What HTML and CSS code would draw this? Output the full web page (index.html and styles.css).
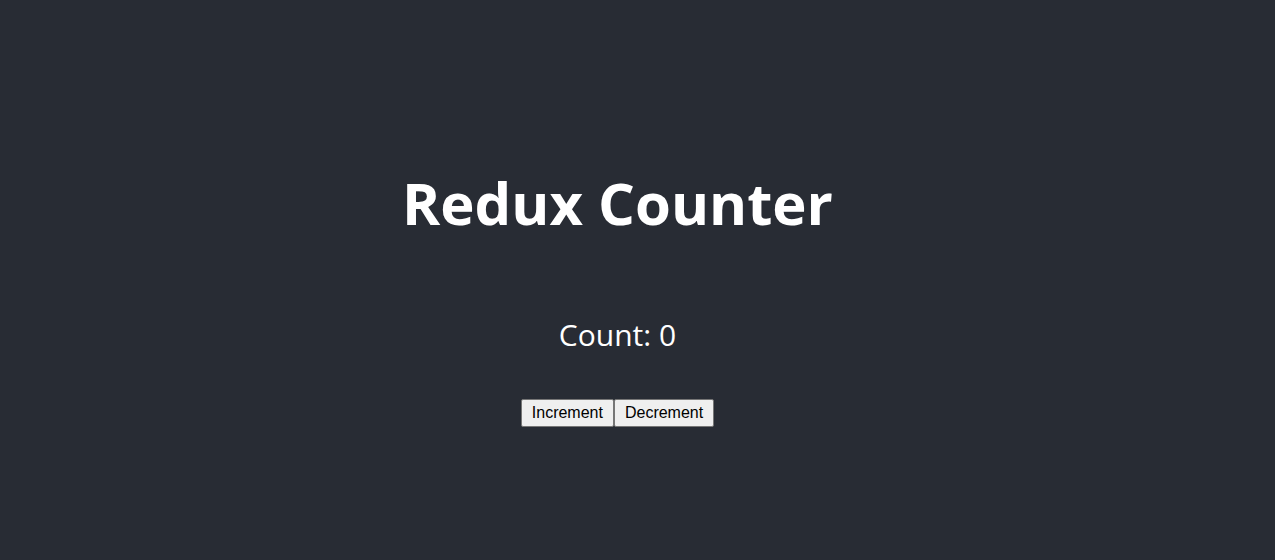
FILE: index.html
```html
<!DOCTYPE html>
<html lang="en">
<head>
<meta charset="utf-8">
<title>Redux Counter</title>
<link rel="stylesheet" href="styles.css">
</head>
<body>
<div class="app">
  <h1 class="title">Redux Counter</h1>
  <p class="count">Count: 0</p>
  <div class="actions">
    <button class="btn" type="button">Increment</button><button class="btn" type="button">Decrement</button>
  </div>
</div>
</body>
</html>
```
FILE: styles.css
```css
html, body {
  margin: 0;
  padding: 0;
}
body {
  background: #282c34;
  font-family: "Open Sans", "Noto Sans", sans-serif;
  color: #ffffff;
}
.app {
  min-height: 100vh;
  box-sizing: border-box;
  padding-top: 34px;
  padding-right: 40px;
  display: flex;
  flex-direction: column;
  align-items: center;
  justify-content: center;
}
.title {
  margin: 0;
  font-size: 58px;
  line-height: 70px;
  font-weight: 700;
}
.count {
  margin: 77px 0 0;
  font-size: 30px;
  line-height: 40px;
  font-weight: 400;
}
.actions {
  margin-top: 44px;
  display: flex;
}
.btn {
  font-family: "Liberation Sans", Arial, sans-serif;
  font-size: 16px;
  line-height: 18px;
  padding: 4px 10px 4px 10px;
  color: #000;
  background: #efefef;
  border: 1px solid #767676;
  border-radius: 2px;
  margin: 0;
}
```
